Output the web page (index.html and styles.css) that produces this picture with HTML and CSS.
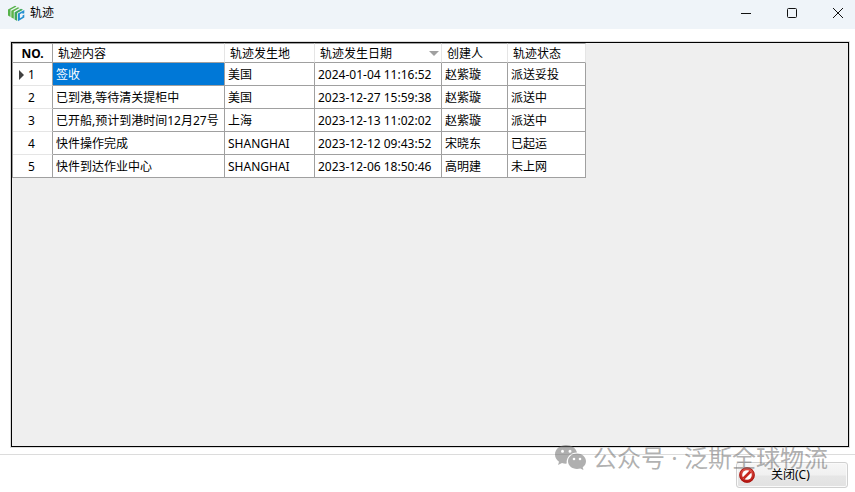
FILE: index.html
```html
<!DOCTYPE html>
<html lang="zh-CN">
<head>
<meta charset="utf-8">
<title>轨迹</title>
<link rel="stylesheet" href="styles.css">
</head>
<body>
<header class="titlebar">
  <svg class="logo" viewBox="0 0 17 17" aria-hidden="true">
    <path d="M0 4.500 7 .8 8.500 1.500 2.500 4.800V12L0 10.500z" fill="#55b24a"/>
    <path d="M3.300 5.800 10 2.200l1.500.8L5.800 6.300v7.500L3.300 12.500z" fill="#5cb548"/>
    <path d="M6.600 7.300 13 3.800l2 1L9.200 8v8L6.600 14.500z" fill="#3fa75c"/>
    <path d="M10 8.500 16.300 5v3.200l-1.800.9V7.800l-2.600 1.500v3.900l2.600-1.500v-1.200l1.800-1v3L10 16.300z" fill="#238fd0"/>
  </svg>
  <h1 class="title">轨迹</h1>
  <div class="controls">
    <button class="control" type="button" aria-label="最小化"><svg viewBox="0 0 12 12"><path d="M1 6.500h10"/></svg></button>
    <button class="control" type="button" aria-label="最大化"><svg viewBox="0 0 12 12"><rect x="1.500" y="1.500" width="9" height="9" rx="1"/></svg></button>
    <button class="control" type="button" aria-label="关闭窗口"><svg viewBox="0 0 12 12"><path d="M1 1l10 10M11 1L1 11"/></svg></button>
  </div>
</header>
<main class="panel">
  <table class="grid">
    <colgroup><col class="c-no"><col class="c-content"><col class="c-place"><col class="c-date"><col class="c-user"><col class="c-status"></colgroup>
    <thead>
      <tr><th class="corner" scope="col">NO.</th><th scope="col">轨迹内容</th><th scope="col">轨迹发生地</th><th scope="col"><span class="sorted">轨迹发生日期<svg class="sort" viewBox="0 0 10 6" aria-hidden="true"><path d="M0 0h10L5 5z"/></svg></span></th><th scope="col">创建人</th><th scope="col">轨迹状态</th></tr>
    </thead>
    <tbody>
      <tr><th class="current" scope="row">1</th><td class="selected">签收</td><td>美国</td><td>2024-01-04 11:16:52</td><td>赵紫璇</td><td>派送妥投</td></tr>
      <tr><th scope="row">2</th><td>已到港,等待清关提柜中</td><td>美国</td><td>2023-12-27 15:59:38</td><td>赵紫璇</td><td>派送中</td></tr>
      <tr><th scope="row">3</th><td>已开船,预计到港时间12月27号</td><td>上海</td><td>2023-12-13 11:02:02</td><td>赵紫璇</td><td>派送中</td></tr>
      <tr><th scope="row">4</th><td>快件操作完成</td><td>SHANGHAI</td><td>2023-12-12 09:43:52</td><td>宋晓东</td><td>已起运</td></tr>
      <tr><th scope="row">5</th><td>快件到达作业中心</td><td>SHANGHAI</td><td>2023-12-06 18:50:46</td><td>高明建</td><td>未上网</td></tr>
    </tbody>
  </table>
</main>
<footer class="footer">
  <button class="close" type="button">
    <svg class="ban" viewBox="0 0 16 16" aria-hidden="true">
      <defs><linearGradient id="red" x2="0" y2="1"><stop stop-color="#e2574c"/><stop offset="1" stop-color="#b5140f"/></linearGradient></defs>
      <circle cx="8" cy="8" r="7.700" fill="url(#red)"/>
      <circle cx="8" cy="8" r="4.800" fill="#fff"/>
      <path d="M4.500 11.500l7-7" stroke="#c8261e" stroke-width="2.600"/>
      <circle cx="8" cy="8" r="7.300" fill="none" stroke="#a3120e" stroke-width=".8"/>
    </svg>
    <span class="close-label">关闭(C)</span>
  </button>
</footer>
<div class="watermark">
  <svg class="wechat" viewBox="0 0 32 26" aria-hidden="true">
    <path fill-rule="evenodd" d="M11 0C5 0 0 4 0 9.500c0 3 1.500 5.500 4 7.200L3 20l4-2c1.500.5 3 .7 4.700.6C11 12 16 7.500 22 7.500 21 3 16.500 0 11 0zM7.500 4.700a1.500 1.500 0 1 1 0 3 1.500 1.500 0 0 1 0-3zm7.500 0a1.500 1.500 0 1 1 0 3 1.500 1.500 0 0 1 0-3z"/>
    <path fill-rule="evenodd" d="M22 8.500c-5 0-9 3.400-9 7.800s4 7.700 9 7.700c1.200 0 2.300-.2 3.300-.5L28.500 25l-.8-2.700c2-1.400 3.300-3.600 3.300-6 0-4.400-4-7.800-9-7.800zM19 12.700a1.300 1.300 0 1 1 0 2.600 1.300 1.300 0 0 1 0-2.600zm6 0a1.300 1.300 0 1 1 0 2.600 1.300 1.300 0 0 1 0-2.600z"/>
  </svg>
  <span>公众号 · 泛斯全球物流</span>
</div>
</body>
</html>
```
FILE: styles.css
```css
* { box-sizing: border-box; }

body {
  display: flex;
  flex-direction: column;
  min-height: 100vh;
  margin: 0;
  background: #fff;
  color: #000;
  font: 12px/16px "Noto Sans", "Noto Sans CJK SC", sans-serif;
}

button { font: inherit; color: inherit; }

.titlebar {
  display: flex;
  align-items: center;
  height: 29px;
  padding-left: 8px;
  padding-bottom: 3px;
  background: #eff4f9;
}
.logo { width: 17px; height: 17px; }
.title { margin: 0 0 0 5px; font-size: 12px; font-weight: 400; }
.controls { display: flex; margin-left: auto; }
.control {
  display: grid;
  place-items: center;
  width: 46px;
  height: 26px;
  padding: 0;
  border: 0;
  background: none;
}
.control:last-child { width: 40px; padding-left: 6px; }
.control svg { width: 12px; height: 12px; fill: none; stroke: #111; }

.panel {
  flex: 1;
  margin: 13px 6px 7px 11px;
  border: 1px solid #000;
  outline: 1px solid #dcdcdc;
  background: #efefef;
}

.grid {
  width: 574px;
  table-layout: fixed;
  border-collapse: separate;
  border-spacing: 0;
  border-left: 1px solid #a0a0a0;
  background: #fff;
}
.c-no { width: 40px; }
.c-content { width: 172px; }
.c-place { width: 90px; }
.c-date { width: 127px; }
.c-user { width: 66px; }
.c-status { width: 78px; }

.grid th, .grid td {
  height: 23px;
  padding: 1px 0 0 3px;
  border-right: 1px solid #a0a0a0;
  border-bottom: 1px solid #a0a0a0;
  font-weight: 400;
  text-align: left;
  white-space: nowrap;
}
.grid thead th {
  height: 20px;
  padding: 1px 0 0 5px;
  border-top: 1px solid #a0a0a0;
  border-right-color: #e5e5e5;
}
.grid thead .corner {
  padding-left: 0;
  border-right-color: #a0a0a0;
  font-weight: 700;
  text-align: center;
}
.grid tbody th {
  padding-left: 0;
  padding-right: 2px;
  border-bottom-color: #e5e5e5;
  text-align: center;
}
.grid tbody tr:last-child th { border-bottom-color: #a0a0a0; }
.grid .selected { background: #0078d7; color: #fff; }
.current::before {
  content: "";
  float: left;
  margin: 3px -11px 0 6px;
  border: 5px solid transparent;
  border-right-width: 0;
  border-left-color: #404040;
}
.sorted { display: flex; align-items: center; justify-content: space-between; padding-right: 2px; }
.sort { width: 10px; height: 6px; fill: #a0a0a0; }

.footer {
  display: flex;
  justify-content: flex-end;
  padding: 7px 7px 4px;
  border-top: 1px solid #dcdcdc;
}
.close {
  display: flex;
  align-items: center;
  gap: 16px;
  width: 112px;
  height: 26px;
  padding: 0 2px;
  border: 1px solid #d0d0d0;
  border-radius: 3px;
  background: linear-gradient(#f6f6f6, #f0f0f0 50%, #e6e6e6 54%, #e2e2e2);
  box-shadow: inset 0 0 0 1px #fafafa;
}
.ban { width: 16px; height: 16px; }

/* Translucent brand mark laid over the bottom of the window. */
.watermark {
  position: absolute;
  right: 27px;
  bottom: 18px;
  display: flex;
  align-items: center;
  gap: 6px;
  color: rgba(110, 110, 110, .55);
  font: 24px/32px "Noto Sans", "Noto Sans CJK SC", sans-serif;
  pointer-events: none;
}
.wechat { width: 32px; height: 26px; fill: currentColor; }
```
